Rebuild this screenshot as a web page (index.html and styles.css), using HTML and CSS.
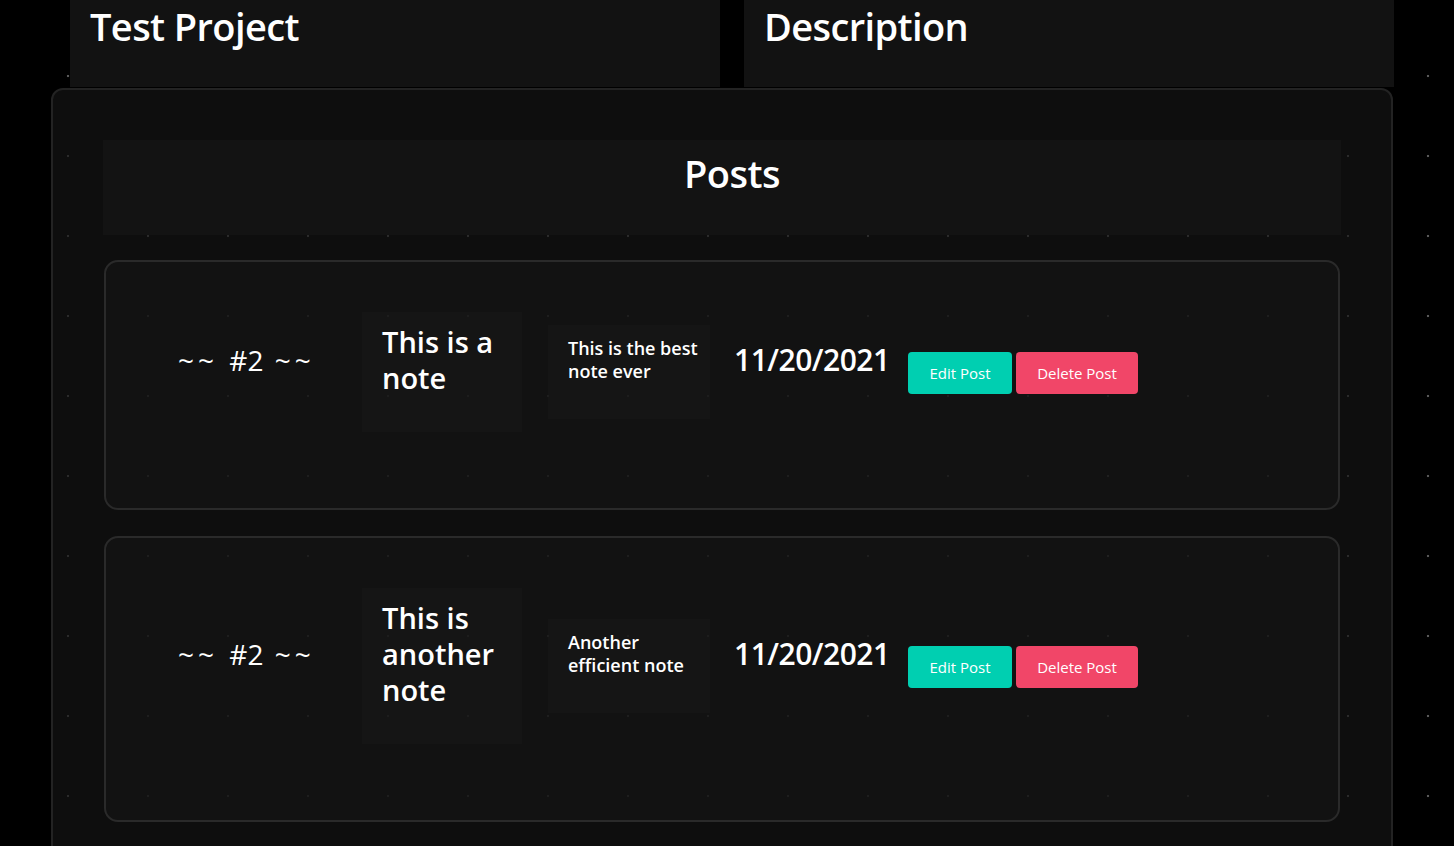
FILE: index.html
```html
<!DOCTYPE html>
<html>
<head>
<meta charset="utf-8">
<link rel="stylesheet" href="styles.css">
</head>
<body>
<div class="top">
  <div class="top-box"><h1 class="top-title">Test Project</h1></div>
  <div class="top-box"><h1 class="top-title">Description</h1></div>
</div>
<main class="panel">
  <div class="posts-head"><h2 class="posts-title">Posts</h2></div>
  <div class="card card-1">
    <div class="row">
      <h3 class="num"><span class="tilde">~~</span> #2 <span class="tilde">~~</span></h3>
      <div class="title-box"><h4 class="note-title">This is a note</h4></div>
      <div class="desc-box"><p class="note-desc">This is the best note ever</p></div>
      <h3 class="date">11/20/2021</h3>
      <div class="actions">
        <button class="btn btn-edit">Edit Post</button>
        <button class="btn btn-delete">Delete Post</button>
      </div>
    </div>
  </div>
  <div class="card card-2">
    <div class="row">
      <h3 class="num"><span class="tilde">~~</span> #2 <span class="tilde">~~</span></h3>
      <div class="title-box"><h4 class="note-title">This is another note</h4></div>
      <div class="desc-box"><p class="note-desc">Another efficient note</p></div>
      <h3 class="date">11/20/2021</h3>
      <div class="actions">
        <button class="btn btn-edit">Edit Post</button>
        <button class="btn btn-delete">Delete Post</button>
      </div>
    </div>
  </div>
</main>
</body>
</html>
```

FILE: styles.css
```css
* { box-sizing: border-box; }
html, body { margin: 0; padding: 0; }
body {
  background-color: #000;
  background-image: radial-gradient(circle at center, #5a5a5a 0, #5a5a5a 1px, rgba(0,0,0,0) 1.6px);
  background-size: 80px 80px;
  background-position: 28px 36px;
  font-family: "Open Sans", "Noto Sans", sans-serif;
  color: #fff;
  height: 846px;
  overflow: hidden;
}
h1, h2, h3, h4, p { margin: 0; }

.top {
  display: flex;
  gap: 24px;
  margin-left: 70px;
  width: 1324px;
}
.top-box {
  flex: 1;
  height: 87px;
  background: #121212;
  padding: 0 20px;
}
.top-title {
  font-size: 38px;
  font-weight: 600;
  line-height: 52px;
  letter-spacing: -0.6px;
}

.panel {
  margin: 1px 0 0 51px;
  width: 1342px;
  min-height: 800px;
  border: 2px solid #232323;
  border-radius: 12px;
  background: rgba(21,21,21,0.67);
  padding: 50px 50px 0 50px;
}
.posts-head {
  height: 95px;
  background: #131313;
  display: flex;
  justify-content: center;
  padding: 10px 0 0 20px;
}
.posts-title {
  font-size: 38px;
  font-weight: 600;
  line-height: 46px;
  letter-spacing: -0.5px;
}

.card {
  margin: 25px 1px 0 1px;
  border: 2px solid #2a2a2a;
  border-radius: 14px;
  background: rgba(21,21,21,0.57);
  padding: 50px 0 0 72px;
}
.card-1 { height: 250px; }
.card-2 { height: 286px; margin-top: 26px; }

.row {
  display: flex;
  align-items: center;
}
.num {
  width: 184px;
  font-size: 28px;
  font-weight: 500;
  line-height: 34px;
  margin-bottom: 24px;
  white-space: nowrap;
  word-spacing: 4px;
}
.tilde {
  letter-spacing: 4px;
}
.title-box {
  width: 160px;
  padding: 12px 4px 12px 20px;
  background: rgba(30,30,30,0.35);
}
.note-title {
  font-size: 29px;
  font-weight: 600;
  line-height: 36px;
  margin-bottom: 24px;
  letter-spacing: 0;
}
.desc-box {
  width: 162px;
  margin-left: 26px;
  padding: 12px 0 12px 20px;
  background: rgba(30,30,30,0.35);
}
.note-desc {
  font-size: 18px;
  font-weight: 600;
  line-height: 23px;
  margin-bottom: 24px;
  letter-spacing: 0;
}
.date {
  margin-left: 24px;
  width: 174px;
  font-size: 30px;
  font-weight: 600;
  line-height: 36px;
  margin-bottom: 24px;
  letter-spacing: -0.5px;
}
.actions {
  display: flex;
  gap: 4px;
}
.btn {
  height: 42px;
  border: 0;
  border-radius: 4px;
  color: #fff;
  font-family: "Open Sans", "Noto Sans", sans-serif;
  font-size: 15px;
  padding: 0 10px;
  margin-top: 2px;
  cursor: pointer;
}
.btn-edit { background: #00cfb1; width: 104px; }
.btn-delete { background: #f14668; width: 122px; }
```
